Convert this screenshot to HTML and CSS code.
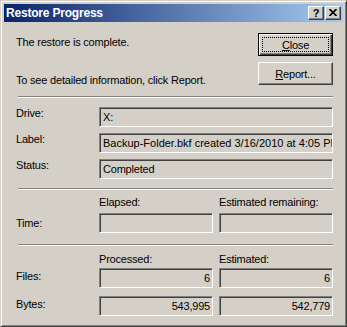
FILE: index.html
```html
<!DOCTYPE html>
<html lang="en">
<head>
    <meta charset="UTF-8">
    <title>Restore Progress</title>
    <link rel="stylesheet" href="styles.css">
</head>
<body>
    <div class="window">
        <div class="titlebar">
            <span class="title">Restore Progress</span>
            <div class="caption-buttons">
                <button class="cap help">?</button>
                <button class="cap close">
                    <svg width="8" height="7" viewBox="0 0 8 7">
                        <path d="M0.5 0 L7.5 7 M7.5 0 L0.5 7" stroke="#000" stroke-width="1.7" fill="none"/>
                    </svg>
                </button>
            </div>
        </div>

        <div class="client">
            <!-- Message and actions -->
            <div class="top">
                <div class="messages">
                    <p class="msg">The restore is complete.</p>
                    <p class="msg second">To see detailed information, click Report.</p>
                </div>
                <div class="actions">
                    <button class="btn default"><u>C</u>lose</button>
                    <button class="btn"><u>R</u>eport...</button>
                </div>
            </div>

            <div class="sep"></div>

            <!-- Media info -->
            <div class="info">
                <span class="label">Drive:</span>
                <div class="field">X:</div>
                <span class="label">Label:</span>
                <div class="field wide">Backup-Folder.bkf created 3/16/2010 at 4:05 PM</div>
                <span class="label">Status:</span>
                <div class="field">Completed</div>
            </div>

            <div class="sep"></div>

            <!-- Time -->
            <div class="time">
                <span></span>
                <span class="head">Elapsed:</span>
                <span class="head">Estimated remaining:</span>
                <span class="label mid">Time:</span>
                <div class="field"></div>
                <div class="field"></div>
            </div>

            <div class="sep"></div>

            <!-- Counts -->
            <div class="counts">
                <span></span>
                <span class="head">Processed:</span>
                <span class="head">Estimated:</span>
                <span class="label low">Files:</span>
                <div class="field num">6</div>
                <div class="field num">6</div>
                <span class="label low">Bytes:</span>
                <div class="field num">543,995</div>
                <div class="field num">542,779</div>
            </div>
        </div>
    </div>
</body>
</html>
```

FILE: styles.css
```css
html, body {
    margin: 0;
    background: #d4d0c8;
    font-family: "Liberation Sans", Arial, sans-serif;
    font-size: 11px;
    line-height: 13px;
    color: #000;
}
.window {
    width: 347px;
    height: 327px;
    box-sizing: border-box;
    border: 1px solid;
    border-color: #d4d0c8 #404040 #404040 #d4d0c8;
    box-shadow: inset 1px 1px #fff, inset -1px -1px #808080;
    padding: 3px;
    background: #d4d0c8;
    display: flex;
    flex-direction: column;
}
.titlebar {
    height: 18px;
    background: linear-gradient(to right, #0a246a, #a6caf0);
    display: flex;
    align-items: center;
    justify-content: space-between;
    padding: 0 2px 0 2px;
}
.title {
    color: #fff;
    font-weight: bold;
    font-size: 12px;
    letter-spacing: -0.2px;
    line-height: 18px;
}
.caption-buttons {
    display: flex;
    gap: 1px;
}
.cap {
    width: 16px;
    height: 14px;
    box-sizing: border-box;
    padding: 0;
    margin: 0;
    background: #d4d0c8;
    border: 1px solid;
    border-color: #fff #404040 #404040 #fff;
    box-shadow: inset -1px -1px #808080;
    display: flex;
    align-items: center;
    justify-content: center;
    font-family: "Liberation Sans", Arial, sans-serif;
    font-weight: bold;
    font-size: 11px;
    line-height: 12px;
    color: #000;
}
.cap svg {
    display: block;
    margin-top: -1px;
}
.client {
    flex: 1;
    padding: 0 10px 0 12px;
    letter-spacing: -0.2px;
}
.top {
    height: 74px;
    display: flex;
    justify-content: space-between;
}
.messages {
    padding-top: 14px;
}
.msg {
    margin: 0;
    white-space: nowrap;
}
.msg.second {
    margin-top: 25px;
}
.actions {
    padding-top: 11px;
    display: flex;
    flex-direction: column;
    gap: 6px;
}
.btn {
    width: 75px;
    height: 23px;
    box-sizing: border-box;
    margin: 0;
    padding: 0;
    background: #d4d0c8;
    border: 1px solid;
    border-color: #fff #404040 #404040 #fff;
    box-shadow: inset -1px -1px #808080;
    font-family: "Liberation Sans", Arial, sans-serif;
    font-size: 11px;
    letter-spacing: -0.2px;
    color: #000;
}
.btn.default {
    border-color: #000;
    box-shadow: inset 1px 1px #fff, inset -1px -1px #404040, inset -2px -2px #808080;
    outline: 1px dotted #000;
    outline-offset: -5px;
}
.sep {
    margin-left: 2px;
    height: 0;
    border-top: 1px solid #808080;
    border-bottom: 1px solid #fff;
}
.info {
    display: grid;
    grid-template-columns: 83px 234px;
    grid-auto-rows: 20px;
    row-gap: 6px;
    padding: 9px 0;
}
.time {
    display: grid;
    grid-template-columns: 77px 114px 114px;
    grid-template-rows: 13px 20px;
    column-gap: 6px;
    row-gap: 4px;
    padding: 6px 0 11px;
}
.counts {
    display: grid;
    grid-template-columns: 77px 114px 114px;
    grid-template-rows: 13px 22px 28px;
    column-gap: 6px;
    padding: 7px 0 0;
}
.counts .field {
    align-self: end;
}
.label {
    align-self: start;
}
.label.mid {
    align-self: center;
}
.label.low {
    align-self: end;
    margin-bottom: 5px;
}
.head {
    white-space: nowrap;
}
.field {
    box-sizing: border-box;
    height: 20px;
    border: 1px solid;
    border-color: #808080 #fff #fff #808080;
    box-shadow: inset 1px 1px #404040, inset -1px -1px #d4d0c8;
    background: #d4d0c8;
    padding: 0 2px 0 3px;
    display: flex;
    align-items: center;
    white-space: nowrap;
    overflow: hidden;
}
.field.wide {
    letter-spacing: 0;
}
.field.num {
    justify-content: flex-end;
}
```
